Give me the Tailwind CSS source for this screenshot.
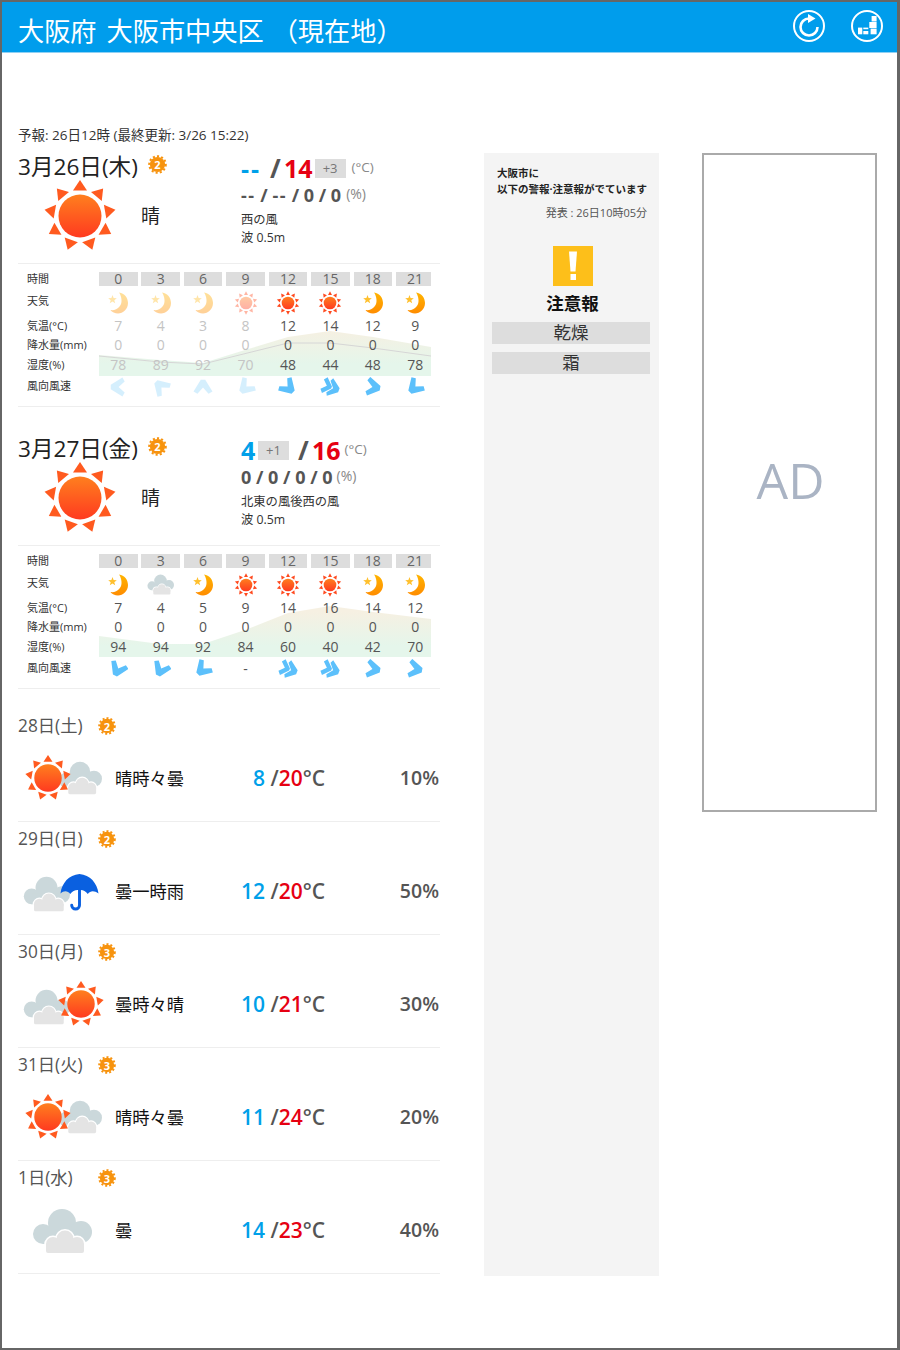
<!DOCTYPE html>
<html lang="ja">
<head>
<meta charset="utf-8">
<title>天気予報</title>
<script src="https://cdn.jsdelivr.net/npm/@tailwindcss/browser@4"></script>
</head>
<body class="bg-white">
<svg class="absolute w-0 h-0" aria-hidden="true">
  <defs>
    <linearGradient id="sg" x1="0" y1="0" x2="0" y2="1"><stop offset="0" stop-color="#ff7f1e"/><stop offset="1" stop-color="#ff3a20"/></linearGradient>
    <linearGradient id="mg" x1="0" y1="0" x2="0" y2="1"><stop offset="0" stop-color="#ffb400"/><stop offset="1" stop-color="#ff8c00"/></linearGradient>
    <linearGradient id="cg" gradientUnits="userSpaceOnUse" x1="0" y1="58" x2="0" y2="92"><stop offset="0" stop-color="#f6f0e2"/><stop offset="1" stop-color="#e5f6eb"/></linearGradient>
    <symbol id="sun" viewBox="-36 -36 72 72">
      <circle r="21.5" fill="url(#sg)"/>
      <g fill="#ff5a1f">
        <polygon points="-7,-25.5 7,-25.5 0,-36"/>
        <polygon points="-7,-25.5 7,-25.5 0,-36" transform="rotate(40)"/>
        <polygon points="-7,-25.5 7,-25.5 0,-36" transform="rotate(80)"/>
        <polygon points="-7,-25.5 7,-25.5 0,-36" transform="rotate(120)"/>
        <polygon points="-7,-25.5 7,-25.5 0,-36" transform="rotate(160)"/>
        <polygon points="-7,-25.5 7,-25.5 0,-36" transform="rotate(200)"/>
        <polygon points="-7,-25.5 7,-25.5 0,-36" transform="rotate(240)"/>
        <polygon points="-7,-25.5 7,-25.5 0,-36" transform="rotate(280)"/>
        <polygon points="-7,-25.5 7,-25.5 0,-36" transform="rotate(320)"/>
      </g>
    </symbol>
    <symbol id="ssun" viewBox="-36 -36 72 72">
      <circle r="19" fill="url(#sg)"/>
      <g fill="#ff4a1f">
        <polygon points="-6,-24 6,-24 0,-35"/>
        <polygon points="-6,-24 6,-24 0,-35" transform="rotate(36)"/>
        <polygon points="-6,-24 6,-24 0,-35" transform="rotate(72)"/>
        <polygon points="-6,-24 6,-24 0,-35" transform="rotate(108)"/>
        <polygon points="-6,-24 6,-24 0,-35" transform="rotate(144)"/>
        <polygon points="-6,-24 6,-24 0,-35" transform="rotate(180)"/>
        <polygon points="-6,-24 6,-24 0,-35" transform="rotate(216)"/>
        <polygon points="-6,-24 6,-24 0,-35" transform="rotate(252)"/>
        <polygon points="-6,-24 6,-24 0,-35" transform="rotate(288)"/>
        <polygon points="-6,-24 6,-24 0,-35" transform="rotate(324)"/>
      </g>
    </symbol>
    <symbol id="moon" viewBox="0 0 20 22">
      <path d="M11,0.5 C16.5,1 20,6 20,11 C20,17 15,21.5 10,21.5 C7,21.5 4,20 2.5,18 C9,19 14,14 13.5,8 C13.3,5 12.5,2.5 11,0.5Z" fill="url(#mg)"/>
      <polygon points="4.5,3 5.6,6 8.8,6.2 6.3,8.2 7.2,11.2 4.5,9.5 1.8,11.2 2.7,8.2 0.2,6.2 3.4,6" fill="#ffc02e"/>
    </symbol>
    <symbol id="cloud" viewBox="0 0 60 46">
      <g fill="#cbd8db">
        <circle cx="11" cy="26" r="10"/><circle cx="30" cy="15" r="14"/><circle cx="49" cy="24" r="11"/><rect x="11" y="22" width="38" height="14"/>
      </g>
      <g fill="#fff" stroke="#fff" stroke-width="3">
        <circle cx="21" cy="36" r="7"/><circle cx="33" cy="31" r="8.5"/><circle cx="45" cy="36" r="7"/><rect x="14" y="35" width="38" height="10"/>
      </g>
      <g fill="#e4e4e4">
        <circle cx="21" cy="36" r="7"/><circle cx="33" cy="31" r="8.5"/><circle cx="45" cy="36" r="7"/><rect x="14" y="35" width="38" height="10" rx="2"/>
      </g>
    </symbol>
    <symbol id="umb" viewBox="0 0 40 40">
      <path d="M20,1 C31,2 38,10 39.5,21 C35,17.5 31,18 28.5,21.5 C26,18 23,17 20,17.5 C16,17 13,18 10.5,21.5 C8,18 4,17.5 0.5,21 C2,10 9,2 20,1Z" fill="#0a60e0"/>
      <path d="M20,17 V33 a4,4 0 0 1 -8,0" fill="none" stroke="#0a60e0" stroke-width="3" stroke-linecap="round"/>
    </symbol>
    <symbol id="badge2" viewBox="0 0 18 18">
      <circle cx="9" cy="9" r="7.2" fill="#f7930e"/>
      <circle cx="9" cy="9" r="7.8" fill="none" stroke="#f7930e" stroke-width="2" stroke-dasharray="2 2"/>
    </symbol>
    <polygon id="chev" points="-4,-8.5 6.5,-2 6.5,2 -4,8.5 -6,5 -0.5,0 -6,-5" fill="#5cc0fb"/>
    <g id="chev2" fill="#5cc0fb">
      <polygon points="0,-8.5 8.5,-2 8.5,2 0,8.5 -1.5,5.5 3,0 -1.5,-5.5"/>
      <polygon points="-5,-7.5 1.5,-1 1.5,1 -5,7.5 -7.5,4.5 -3,0 -7.5,-4.5"/>
    </g>
  </defs>
</svg>

<div class="w-[900px] h-[1350px] border-2 border-r-[3px] border-[#666] overflow-hidden font-['Open_Sans','Noto_Sans_CJK_JP',sans-serif] text-[#333]">
  <header class="h-[51px] bg-[#009dec] border-b border-[#8fd0f3] flex items-center justify-between pl-[16px] pr-[14px]">
    <h1 class="mt-[9px] text-[26.2px] font-normal text-white leading-none">大阪府<span class="ml-[10px]">大阪市中央区</span><span class="ml-[8px]">（現在地）</span></h1>
    <div class="-mt-[3px] flex items-center gap-[26px]">
      <svg class="w-[32px] h-[32px]" viewBox="0 0 32 32" fill="none">
        <circle cx="16" cy="16" r="15" stroke="#fff" stroke-width="2"/>
        <path d="M24.5,17 A8.5,8.5 0 1 1 16,8.5" stroke="#fff" stroke-width="2.6"/>
        <polygon points="15,4 22.5,8.5 15,13" fill="#fff"/>
      </svg>
      <svg class="w-[32px] h-[32px]" viewBox="0 0 32 32" fill="none">
        <circle cx="16" cy="16" r="15" stroke="#fff" stroke-width="2"/>
        <g fill="#fff">
          <rect x="20.6" y="6" width="5" height="5.5"/><rect x="18.3" y="12" width="7.3" height="6"/><rect x="19.6" y="18.6" width="6" height="5.7"/>
          <rect x="7" y="17.6" width="4.3" height="6.7"/><rect x="12.3" y="21" width="5" height="3.3"/><rect x="12.3" y="17.6" width="5" height="1.6"/>
        </g>
      </svg>
    </div>
  </header>

  <main class="flex pl-[16px]">
    <!-- 左カラム -->
    <div class="w-[422px] pt-[72px]">
      <p class="h-[20px] text-[13.5px] leading-[20px] text-[#333] whitespace-nowrap">予報: 26日12時 (最終更新: 3/26 15:22)</p>
      <div class="h-[8px]"></div>

      <!-- 3月26日 -->
      <section>
        <div class="flex h-[110px]">
          <div class="w-[223px]">
            <div class="h-[28px] flex items-center gap-[10px]">
              <span class="text-[22.6px] leading-none text-[#222] whitespace-nowrap">3月26日(木)</span>
              <span class="relative w-[19px] h-[19px] -mt-[5px] flex items-center justify-center">
                <svg class="absolute inset-0 w-[19px] h-[19px]"><use href="#badge2"/></svg>
                <span class="relative text-[11px] font-bold text-white leading-none">2</span>
              </span>
            </div>
            <div class="flex items-center pl-[26px] h-[70px]">
              <svg class="w-[72px] h-[72px] shrink-0"><use href="#sun"/></svg>
              <span class="ml-[25px] text-[19px] text-[#222] leading-none">晴</span>
            </div>
          </div>
          <div>
            <div class="h-[30px] flex items-center font-bold text-[25px] leading-none">
              <span class="text-[#00a0e9] w-[29px] tracking-[2px]">--</span>
              <span class="text-[#555] text-[26px] w-[14px]">/</span>
              <span class="text-[#e60012]">14</span>
              <span class="ml-[2px] w-[31px] h-[19px] bg-[#ddd] text-[#777] text-[13px] font-normal flex items-center justify-center">+3</span>
              <span class="ml-[6px] text-[13.5px] font-normal text-[#888]">(°C)</span>
            </div>
            <div class="h-[27px] pb-[3px] flex items-center font-bold text-[18px] text-[#555] leading-none">
              <span><span class="tracking-[1.5px]">--</span> / <span class="tracking-[1.5px]">--</span> / 0 / 0</span>
              <span class="ml-[5px] -mt-[3px] text-[14px] font-normal text-[#888]">(%)</span>
            </div>
            <p class="h-[19px] text-[12.3px] leading-[19px]">西の風</p>
            <p class="h-[18px] text-[12.3px] leading-[18px]">波 0.5m</p>
          </div>
        </div>
        <div class="relative border-t border-b border-[#eee] pt-[8px] pb-[4px]">
          <svg class="absolute left-[81px] top-[8px] w-[332px] h-[120px]" viewBox="0 0 332 120" fill="none">
            <polygon points="0,83 61,88 104,91 146,78 189,65 231,59 274,65 332,75 332,104 0,104" fill="url(#cg)"/>
            <polyline points="0,84 61,90 104,92 189,71 231,71 274,76 332,84" stroke="#d6d6d6" stroke-width="1"/>
          </svg>
          <div class="relative grid grid-cols-[81px_repeat(8,42.45px)] grid-rows-[14px_33px_12px_26px_14px_31px] items-center text-[14px] text-center text-[#555]">
            <div class="pl-[9px] text-[11px] text-left text-[#333]">時間</div>
            <div class="w-[38.5px] h-[14px] bg-[#ddd] leading-[14px] text-[#666]">0</div><div class="w-[38.5px] h-[14px] bg-[#ddd] leading-[14px] text-[#666]">3</div><div class="w-[38.5px] h-[14px] bg-[#ddd] leading-[14px] text-[#666]">6</div><div class="w-[38.5px] h-[14px] bg-[#ddd] leading-[14px] text-[#666]">9</div><div class="w-[38.5px] h-[14px] bg-[#ddd] leading-[14px] text-[#666]">12</div><div class="w-[38.5px] h-[14px] bg-[#ddd] leading-[14px] text-[#666]">15</div><div class="w-[38.5px] h-[14px] bg-[#ddd] leading-[14px] text-[#666]">18</div><div class="w-[35px] pl-[3px] h-[14px] bg-[#ddd] leading-[14px] text-[#666]">21</div>

            <div class="pl-[9px] text-[11px] text-left text-[#333] -mt-[2px]">天気</div>
            <div class="w-[38.5px] flex justify-center opacity-40"><svg class="w-[20px] h-[22px]"><use href="#moon"/></svg></div>
            <div class="w-[38.5px] flex justify-center opacity-40"><svg class="w-[20px] h-[22px]"><use href="#moon"/></svg></div>
            <div class="w-[38.5px] flex justify-center opacity-40"><svg class="w-[20px] h-[22px]"><use href="#moon"/></svg></div>
            <div class="w-[38.5px] flex justify-center opacity-40"><svg class="w-[24px] h-[24px]"><use href="#ssun"/></svg></div>
            <div class="w-[38.5px] flex justify-center"><svg class="w-[24px] h-[24px]"><use href="#ssun"/></svg></div>
            <div class="w-[38.5px] flex justify-center"><svg class="w-[24px] h-[24px]"><use href="#ssun"/></svg></div>
            <div class="w-[38.5px] flex justify-center"><svg class="w-[20px] h-[22px]"><use href="#moon"/></svg></div>
            <div class="w-[38.5px] flex justify-center"><svg class="w-[20px] h-[22px]"><use href="#moon"/></svg></div>

            <div class="pl-[9px] mt-[3px] text-[11px] text-left text-[#333]">気温(°C)</div>
            <div class="w-[38.5px] text-[#c4c4c4]">7</div><div class="w-[38.5px] text-[#c4c4c4]">4</div><div class="w-[38.5px] text-[#c4c4c4]">3</div><div class="w-[38.5px] text-[#c4c4c4]">8</div><div class="w-[38.5px]">12</div><div class="w-[38.5px]">14</div><div class="w-[38.5px]">12</div><div class="w-[38.5px]">9</div>

            <div class="pl-[9px] mt-[3px] text-[11px] text-left text-[#333]">降水量(mm)</div>
            <div class="w-[38.5px] text-[#c4c4c4]">0</div><div class="w-[38.5px] text-[#c4c4c4]">0</div><div class="w-[38.5px] text-[#c4c4c4]">0</div><div class="w-[38.5px] text-[#c4c4c4]">0</div><div class="w-[38.5px]">0</div><div class="w-[38.5px]">0</div><div class="w-[38.5px]">0</div><div class="w-[38.5px]">0</div>

            <div class="pl-[9px] mt-[3px] text-[11px] text-left text-[#333]">湿度(%)</div>
            <div class="w-[38.5px] text-[#c4c4c4]">78</div><div class="w-[38.5px] text-[#c4c4c4]">89</div><div class="w-[38.5px] text-[#c4c4c4]">92</div><div class="w-[38.5px] text-[#c4c4c4]">70</div><div class="w-[38.5px]">48</div><div class="w-[38.5px]">44</div><div class="w-[38.5px]">48</div><div class="w-[38.5px]">78</div>

            <div class="pl-[9px] text-[11px] text-left text-[#333]">風向風速</div>
            <div class="w-[38.5px] flex justify-center opacity-25"><svg class="w-[20px] h-[20px]" viewBox="-9 -9 18 18"><use href="#chev" transform="rotate(180)"/></svg></div>
            <div class="w-[38.5px] flex justify-center opacity-25"><svg class="w-[20px] h-[20px]" viewBox="-9 -9 18 18"><use href="#chev" transform="rotate(225)"/></svg></div>
            <div class="w-[38.5px] flex justify-center opacity-25"><svg class="w-[20px] h-[20px]" viewBox="-9 -9 18 18"><use href="#chev" transform="rotate(270)"/></svg></div>
            <div class="w-[38.5px] flex justify-center opacity-25"><svg class="w-[20px] h-[20px]" viewBox="-9 -9 18 18"><use href="#chev" transform="rotate(135)"/></svg></div>
            <div class="w-[38.5px] flex justify-center"><svg class="w-[20px] h-[20px]" viewBox="-9 -9 18 18"><use href="#chev" transform="rotate(45)"/></svg></div>
            <div class="w-[38.5px] flex justify-center"><svg class="w-[20px] h-[20px]" viewBox="-9 -9 18 18"><use href="#chev2" transform="rotate(20)"/></svg></div>
            <div class="w-[38.5px] flex justify-center"><svg class="w-[20px] h-[20px]" viewBox="-9 -9 18 18"><use href="#chev" transform="rotate(10)"/></svg></div>
            <div class="w-[38.5px] flex justify-center"><svg class="w-[20px] h-[20px]" viewBox="-9 -9 18 18"><use href="#chev" transform="rotate(135)"/></svg></div>
          </div>
        </div>
      </section>

      <!-- 3月27日 -->
      <section class="mt-[28px]">
        <div class="flex h-[110px]">
          <div class="w-[223px]">
            <div class="h-[28px] flex items-center gap-[10px]">
              <span class="text-[22.6px] leading-none text-[#222] whitespace-nowrap">3月27日(金)</span>
              <span class="relative w-[19px] h-[19px] -mt-[5px] flex items-center justify-center">
                <svg class="absolute inset-0 w-[19px] h-[19px]"><use href="#badge2"/></svg>
                <span class="relative text-[11px] font-bold text-white leading-none">2</span>
              </span>
            </div>
            <div class="flex items-center pl-[26px] h-[70px]">
              <svg class="w-[72px] h-[72px] shrink-0"><use href="#sun"/></svg>
              <span class="ml-[25px] text-[19px] text-[#222] leading-none">晴</span>
            </div>
          </div>
          <div>
            <div class="h-[30px] flex items-center font-bold text-[25px] leading-none">
              <span class="text-[#00a0e9] w-[17px]">4</span>
              <span class="w-[31px] h-[19px] bg-[#ddd] text-[#777] text-[13px] font-normal flex items-center justify-center">+1</span>
              <span class="ml-[9px] text-[#555] text-[26px] w-[14px]">/</span>
              <span class="text-[#e60012]">16</span>
              <span class="ml-[4px] text-[13.5px] font-normal text-[#888]">(°C)</span>
            </div>
            <div class="h-[27px] pb-[3px] flex items-center font-bold text-[18px] text-[#555] leading-none">
              <span>0 / 0 / 0 / 0</span>
              <span class="ml-[4px] -mt-[3px] text-[14px] font-normal text-[#888]">(%)</span>
            </div>
            <p class="h-[19px] text-[12.3px] leading-[19px] whitespace-nowrap">北東の風後西の風</p>
            <p class="h-[18px] text-[12.3px] leading-[18px]">波 0.5m</p>
          </div>
        </div>
        <div class="relative border-t border-b border-[#eee] pt-[8px] pb-[4px]">
          <svg class="absolute left-[81px] top-[8px] w-[332px] h-[120px]" viewBox="0 0 332 120" fill="none">
            <polygon points="0,82 61,90 104,90 146,76 189,59 231,52 274,58 332,65 332,103 0,103" fill="url(#cg)"/>
          </svg>
          <div class="relative grid grid-cols-[81px_repeat(8,42.45px)] grid-rows-[14px_33px_12px_26px_14px_31px] items-center text-[14px] text-center text-[#555]">
            <div class="pl-[9px] text-[11px] text-left text-[#333]">時間</div>
            <div class="w-[38.5px] h-[14px] bg-[#ddd] leading-[14px] text-[#666]">0</div><div class="w-[38.5px] h-[14px] bg-[#ddd] leading-[14px] text-[#666]">3</div><div class="w-[38.5px] h-[14px] bg-[#ddd] leading-[14px] text-[#666]">6</div><div class="w-[38.5px] h-[14px] bg-[#ddd] leading-[14px] text-[#666]">9</div><div class="w-[38.5px] h-[14px] bg-[#ddd] leading-[14px] text-[#666]">12</div><div class="w-[38.5px] h-[14px] bg-[#ddd] leading-[14px] text-[#666]">15</div><div class="w-[38.5px] h-[14px] bg-[#ddd] leading-[14px] text-[#666]">18</div><div class="w-[35px] pl-[3px] h-[14px] bg-[#ddd] leading-[14px] text-[#666]">21</div>

            <div class="pl-[9px] text-[11px] text-left text-[#333] -mt-[2px]">天気</div>
            <div class="w-[38.5px] flex justify-center"><svg class="w-[20px] h-[22px]"><use href="#moon"/></svg></div>
            <div class="w-[38.5px] flex justify-center"><svg class="w-[27px] h-[21px]"><use href="#cloud"/></svg></div>
            <div class="w-[38.5px] flex justify-center"><svg class="w-[20px] h-[22px]"><use href="#moon"/></svg></div>
            <div class="w-[38.5px] flex justify-center"><svg class="w-[24px] h-[24px]"><use href="#ssun"/></svg></div>
            <div class="w-[38.5px] flex justify-center"><svg class="w-[24px] h-[24px]"><use href="#ssun"/></svg></div>
            <div class="w-[38.5px] flex justify-center"><svg class="w-[24px] h-[24px]"><use href="#ssun"/></svg></div>
            <div class="w-[38.5px] flex justify-center"><svg class="w-[20px] h-[22px]"><use href="#moon"/></svg></div>
            <div class="w-[38.5px] flex justify-center"><svg class="w-[20px] h-[22px]"><use href="#moon"/></svg></div>

            <div class="pl-[9px] mt-[3px] text-[11px] text-left text-[#333]">気温(°C)</div>
            <div class="w-[38.5px]">7</div><div class="w-[38.5px]">4</div><div class="w-[38.5px]">5</div><div class="w-[38.5px]">9</div><div class="w-[38.5px]">14</div><div class="w-[38.5px]">16</div><div class="w-[38.5px]">14</div><div class="w-[38.5px]">12</div>

            <div class="pl-[9px] mt-[3px] text-[11px] text-left text-[#333]">降水量(mm)</div>
            <div class="w-[38.5px]">0</div><div class="w-[38.5px]">0</div><div class="w-[38.5px]">0</div><div class="w-[38.5px]">0</div><div class="w-[38.5px]">0</div><div class="w-[38.5px]">0</div><div class="w-[38.5px]">0</div><div class="w-[38.5px]">0</div>

            <div class="pl-[9px] mt-[3px] text-[11px] text-left text-[#333]">湿度(%)</div>
            <div class="w-[38.5px]">94</div><div class="w-[38.5px]">94</div><div class="w-[38.5px]">92</div><div class="w-[38.5px]">84</div><div class="w-[38.5px]">60</div><div class="w-[38.5px]">40</div><div class="w-[38.5px]">42</div><div class="w-[38.5px]">70</div>

            <div class="pl-[9px] text-[11px] text-left text-[#333]">風向風速</div>
            <div class="w-[38.5px] flex justify-center"><svg class="w-[20px] h-[20px]" viewBox="-9 -9 18 18"><use href="#chev" transform="rotate(115)"/></svg></div>
            <div class="w-[38.5px] flex justify-center"><svg class="w-[20px] h-[20px]" viewBox="-9 -9 18 18"><use href="#chev" transform="rotate(115)"/></svg></div>
            <div class="w-[38.5px] flex justify-center"><svg class="w-[20px] h-[20px]" viewBox="-9 -9 18 18"><use href="#chev" transform="rotate(135)"/></svg></div>
            <div class="w-[38.5px]">-</div>
            <div class="w-[38.5px] flex justify-center"><svg class="w-[20px] h-[20px]" viewBox="-9 -9 18 18"><use href="#chev2" transform="rotate(20)"/></svg></div>
            <div class="w-[38.5px] flex justify-center"><svg class="w-[20px] h-[20px]" viewBox="-9 -9 18 18"><use href="#chev2" transform="rotate(20)"/></svg></div>
            <div class="w-[38.5px] flex justify-center"><svg class="w-[20px] h-[20px]" viewBox="-9 -9 18 18"><use href="#chev" transform="rotate(10)"/></svg></div>
            <div class="w-[38.5px] flex justify-center"><svg class="w-[20px] h-[20px]" viewBox="-9 -9 18 18"><use href="#chev" transform="rotate(10)"/></svg></div>
          </div>
        </div>
      </section>

      <!-- 週間 -->
      <div class="mt-[20px]">
        <article class="h-[113px] border-b border-[#eee]">
          <div class="h-[34px] flex items-center text-[17.3px] text-[#555] leading-none">
            <span class="w-[80px]">28日(土)</span>
            <span class="relative w-[18px] h-[18px] flex items-center justify-center"><svg class="absolute inset-0 w-[18px] h-[18px]"><use href="#badge2"/></svg><span class="relative text-[11px] font-bold text-white leading-none">2</span></span>
          </div>
          <div class="h-[70px] grid grid-cols-[97px_100px_110px_1fr] items-center leading-none">
            <svg class="w-[90px] h-[50px]"><use href="#cloud" x="40" y="8" width="44" height="34"/><use href="#sun" x="7" y="2" width="46" height="46"/></svg>
            <span class="pt-[2px] text-[17.3px] text-[#111]">晴時々曇</span>
            <span class="text-[21px] font-semibold text-right text-[#555]"><span class="text-[#00a0e9]">8</span> /<span class="text-[#e60012]">20</span>°C</span>
            <span class="text-[19.5px] font-semibold text-right text-[#555] pr-[1px]">10%</span>
          </div>
        </article>
        <article class="h-[113px] border-b border-[#eee]">
          <div class="h-[34px] flex items-center text-[17.3px] text-[#555] leading-none">
            <span class="w-[80px]">29日(日)</span>
            <span class="relative w-[18px] h-[18px] flex items-center justify-center"><svg class="absolute inset-0 w-[18px] h-[18px]"><use href="#badge2"/></svg><span class="relative text-[11px] font-bold text-white leading-none">2</span></span>
          </div>
          <div class="h-[70px] grid grid-cols-[97px_100px_110px_1fr] items-center leading-none">
            <svg class="w-[90px] h-[50px]"><use href="#cloud" x="5" y="10" width="47" height="36"/><use href="#umb" x="42" y="7" width="39" height="39"/></svg>
            <span class="pt-[2px] text-[17.3px] text-[#111]">曇一時雨</span>
            <span class="text-[21px] font-semibold text-right text-[#555]"><span class="text-[#00a0e9]">12</span> /<span class="text-[#e60012]">20</span>°C</span>
            <span class="text-[19.5px] font-semibold text-right text-[#555] pr-[1px]">50%</span>
          </div>
        </article>
        <article class="h-[113px] border-b border-[#eee]">
          <div class="h-[34px] flex items-center text-[17.3px] text-[#555] leading-none">
            <span class="w-[80px]">30日(月)</span>
            <span class="relative w-[18px] h-[18px] flex items-center justify-center"><svg class="absolute inset-0 w-[18px] h-[18px]"><use href="#badge2"/></svg><span class="relative text-[11px] font-bold text-white leading-none">3</span></span>
          </div>
          <div class="h-[70px] grid grid-cols-[97px_100px_110px_1fr] items-center leading-none">
            <svg class="w-[90px] h-[50px]"><use href="#cloud" x="5" y="10" width="47" height="36"/><use href="#sun" x="40" y="2" width="46" height="46"/></svg>
            <span class="pt-[2px] text-[17.3px] text-[#111]">曇時々晴</span>
            <span class="text-[21px] font-semibold text-right text-[#555]"><span class="text-[#00a0e9]">10</span> /<span class="text-[#e60012]">21</span>°C</span>
            <span class="text-[19.5px] font-semibold text-right text-[#555] pr-[1px]">30%</span>
          </div>
        </article>
        <article class="h-[113px] border-b border-[#eee]">
          <div class="h-[34px] flex items-center text-[17.3px] text-[#555] leading-none">
            <span class="w-[80px]">31日(火)</span>
            <span class="relative w-[18px] h-[18px] flex items-center justify-center"><svg class="absolute inset-0 w-[18px] h-[18px]"><use href="#badge2"/></svg><span class="relative text-[11px] font-bold text-white leading-none">3</span></span>
          </div>
          <div class="h-[70px] grid grid-cols-[97px_100px_110px_1fr] items-center leading-none">
            <svg class="w-[90px] h-[50px]"><use href="#cloud" x="40" y="8" width="44" height="34"/><use href="#sun" x="7" y="2" width="46" height="46"/></svg>
            <span class="pt-[2px] text-[17.3px] text-[#111]">晴時々曇</span>
            <span class="text-[21px] font-semibold text-right text-[#555]"><span class="text-[#00a0e9]">11</span> /<span class="text-[#e60012]">24</span>°C</span>
            <span class="text-[19.5px] font-semibold text-right text-[#555] pr-[1px]">20%</span>
          </div>
        </article>
        <article class="h-[113px] border-b border-[#eee]">
          <div class="h-[34px] flex items-center text-[17.3px] text-[#555] leading-none">
            <span class="w-[80px]">1日(水)</span>
            <span class="relative w-[18px] h-[18px] flex items-center justify-center"><svg class="absolute inset-0 w-[18px] h-[18px]"><use href="#badge2"/></svg><span class="relative text-[11px] font-bold text-white leading-none">3</span></span>
          </div>
          <div class="h-[70px] grid grid-cols-[97px_100px_110px_1fr] items-center leading-none">
            <svg class="w-[90px] h-[50px]"><use href="#cloud" x="14" y="3" width="60" height="46"/></svg>
            <span class="pt-[2px] text-[17.3px] text-[#111]">曇</span>
            <span class="text-[21px] font-semibold text-right text-[#555]"><span class="text-[#00a0e9]">14</span> /<span class="text-[#e60012]">23</span>°C</span>
            <span class="text-[19.5px] font-semibold text-right text-[#555] pr-[1px]">40%</span>
          </div>
        </article>
      </div>
    </div>

    <!-- 注意報 -->
    <aside class="ml-[44px] mt-[100px] w-[175px] h-[1123px] bg-[#f4f4f4] pl-[8px] pr-[9px] pt-[12px]">
      <p class="pl-[5px] text-[10.5px] font-bold leading-[16px] text-[#222] whitespace-nowrap">大阪市に<br>以下の警報·注意報がでています</p>
      <p class="mt-[8px] pr-[3px] text-right text-[11px] leading-[16px] text-[#555]">発表 : 26日10時05分</p>
      <div class="mt-[25px] pl-[3px] flex justify-center">
        <svg class="w-[40px] h-[40px]" viewBox="0 0 40 40"><rect width="40" height="40" fill="#fdbf1a"/><polygon points="16,5.5 24,5.5 22.5,25.5 17.5,25.5" fill="#fff"/><rect x="17.5" y="28" width="5.5" height="6" fill="#fff"/></svg>
      </div>
      <p class="mt-[7px] pl-[3px] text-center text-[17.5px] font-bold leading-[20px] text-[#111]">注意報</p>
      <p class="mt-[9px] h-[22px] bg-[#ddd] text-center text-[17.5px] leading-[21px] text-[#333]">乾燥</p>
      <p class="mt-[8px] h-[22px] bg-[#ddd] text-center text-[17.5px] leading-[21px] text-[#333]">霜</p>
    </aside>

    <!-- 広告 -->
    <aside class="ml-[43px] mt-[100px] w-[175px] h-[659px] border-2 border-[#aaa] flex items-center justify-center">
      <span class="-mt-[5px] ml-[2px] text-[50px] text-[#aab4c4] leading-none">AD</span>
    </aside>
  </main>
</div>
</body>
</html>
